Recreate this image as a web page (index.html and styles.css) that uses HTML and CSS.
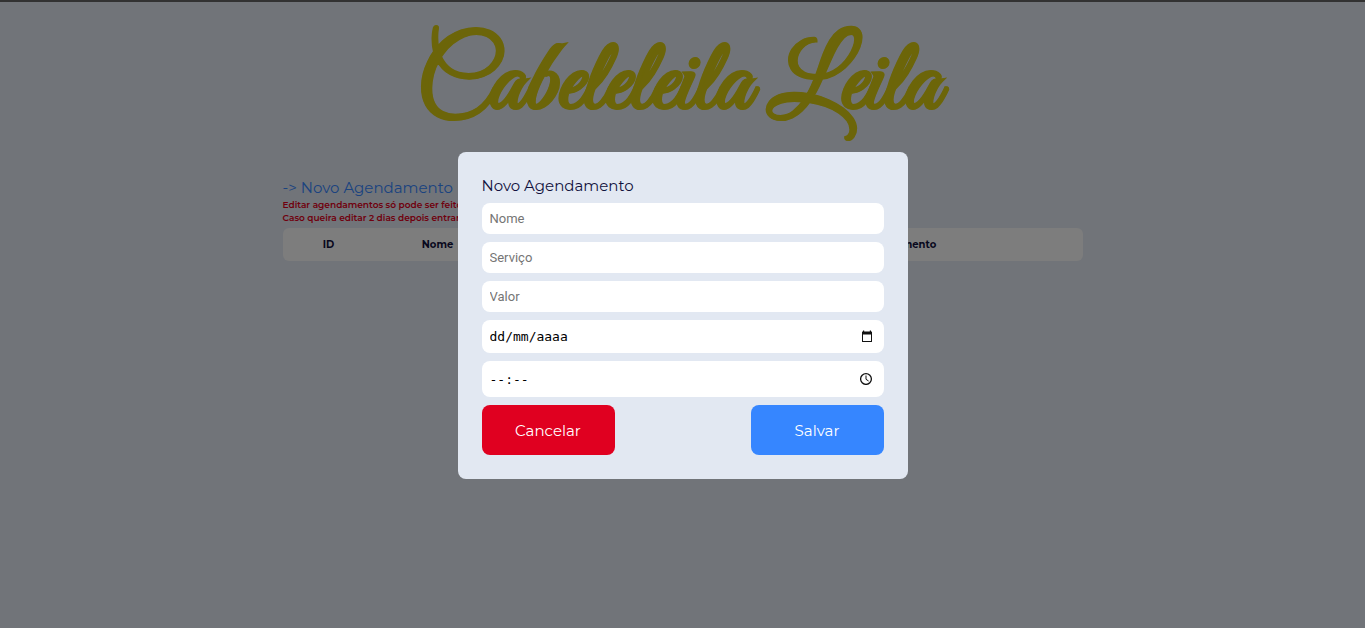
FILE: index.html
```html
<!DOCTYPE html>
<html lang="pt-BR">
<head>
<meta charset="utf-8">
<meta name="viewport" content="width=device-width, initial-scale=1">
<title>Cabeleleila Leila</title>
<link rel="stylesheet" href="styles.css">
</head>
<body>
<header class="brand"><h1 class="brand-name">Cabeleleila Leila</h1></header>
<main class="content">
  <a class="new-link" href="#modal">-&gt; Novo Agendamento</a>
  <p class="notice">Editar agendamentos só pode ser feitos</p>
  <p class="notice">Caso queira editar 2 dias depois entrar em</p>
  <table class="bookings">
    <colgroup><col class="col-id"><col class="col-name"><col><col class="col-date"><col class="col-actions"></colgroup>
    <thead><tr><th scope="col">ID</th><th scope="col">Nome</th><td></td><th scope="col">Agendamento</th><td></td></tr></thead>
  </table>
</main>
<div class="overlay">
  <form class="modal" id="modal" role="dialog" aria-labelledby="modal-title">
    <h2 class="modal-title" id="modal-title">Novo Agendamento</h2>
    <input class="field" type="text" placeholder="Nome" aria-label="Nome">
    <input class="field" type="text" placeholder="Serviço" aria-label="Serviço">
    <input class="field" type="text" placeholder="Valor" aria-label="Valor">
    <div class="picker picker-date">
      <input class="picker-input" type="text" placeholder="dd/mm/aaaa" aria-label="Data">
      <button class="picker-button" type="button" aria-label="Abrir calendário">
        <svg width="13" height="13" viewBox="0 0 13 13" aria-hidden="true"><path d="M3 .5h1.200v1h5.600v-1H11v1h.4q.6 0 .6.600v9.300q0 .6-.6.6H2.600q-.6 0-.6-.6V2.100q0-.6.6-.6H3zM3 4.500V11h8V4.500z" fill="#111" fill-rule="evenodd"/></svg>
      </button>
    </div>
    <div class="picker picker-time">
      <input class="picker-input" type="text" placeholder="--:--" aria-label="Horário">
      <button class="picker-button" type="button" aria-label="Abrir horário">
        <svg width="13" height="13" viewBox="0 0 13 13" aria-hidden="true"><circle cx="6" cy="7" r="5.400" fill="none" stroke="#111" stroke-width="1.300"/><path d="M6 3.500v3.800l2.600 1.700" fill="none" stroke="#111"/></svg>
      </button>
    </div>
    <div class="actions">
      <button class="action cancel" type="button">Cancelar</button>
      <button class="action save" type="submit">Salvar</button>
    </div>
  </form>
</div>
</body>
</html>
```
FILE: styles.css
```css
* { box-sizing: border-box; }
body {
  margin: 0;
  min-height: 100vh;
  border-top: 2px solid #323232;
  background: #e2e8f2;
  color: #11113d;
  font-family: Montserrat, Inter, sans-serif;
}
.brand { display: flex; justify-content: center; padding: 24px 24px 0 16px; }
.brand-name {
  margin: 0;
  font: 700 100px/120px "Great Vibes", cursive;
  font-kerning: none;
  color: #d8cb12;
  -webkit-text-stroke: 1px #d8cb12;
}
.content { width: 100%; max-width: 800px; margin: 0 auto; padding-top: 32px; }
.new-link {
  display: block;
  font-size: 15px;
  line-height: 20px;
  font-weight: 400;
  color: #3686ff;
  text-decoration: none;
}
.notice { margin: 0; font-size: 9px; line-height: 13px; font-weight: 600; color: #e00020; white-space: nowrap; }
.bookings {
  width: 100%;
  margin-top: 4px;
  table-layout: fixed;
  border-collapse: collapse;
  border-radius: 6px;
  background: #fafafa;
  font-size: 10px;
  line-height: 17px;
}
.bookings th { padding: 8px 0; text-align: center; font-weight: 700; }
.col-id { width: 92px; }
.col-name { width: 126px; }
.col-date { width: 154px; }
.col-actions { width: 107px; }
.overlay {
  position: fixed;
  inset: 2px 0 0;
  display: flex;
  align-items: center;
  justify-content: center;
  background: rgba(0, 0, 0, .5);
}
.modal {
  display: flex;
  flex-direction: column;
  gap: 8px;
  width: 100%;
  max-width: 450px;
  padding: 24px;
  border-radius: 8px;
  background: #e2e8f2;
}
.modal-title { margin: 0; font-size: 15px; line-height: 19px; font-weight: 400; }
.field, .picker { width: 100%; border: 0; border-radius: 8px; background: #fff; }
.field { padding: 8px; font: 13px/15px Roboto, sans-serif; }
.field::placeholder { color: #757575; }
.picker { display: flex; align-items: center; padding: 0 11px 0 8px; }
.picker-date { height: 33px; }
.picker-time { height: 36px; }
.picker-input {
  flex: 1;
  min-width: 0;
  padding: 2px 0 0;
  border: 0;
  background: none;
  font: 13px/16px "DejaVu Sans Mono", monospace;
}
.picker-input::placeholder { color: #000; opacity: 1; }
.picker-button { display: flex; padding: 0; border: 0; background: none; }
.actions { display: flex; justify-content: space-between; }
.action {
  width: 133px;
  height: 50px;
  padding: 2px 0 0;
  border: 0;
  border-radius: 8px;
  color: #fff;
  font: 400 15px/20px Montserrat, Inter, sans-serif;
}
.cancel { background: #e00020; }
.save { background: #3686ff; }
```
